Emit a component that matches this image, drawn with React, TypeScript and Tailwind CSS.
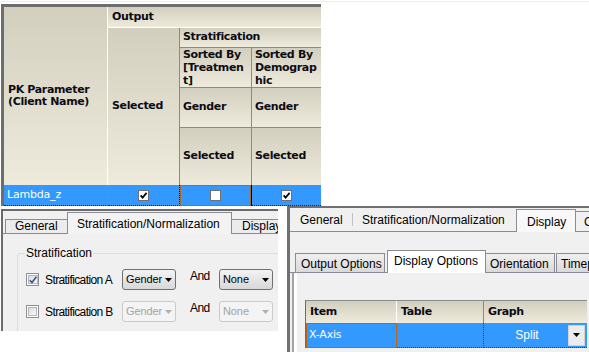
import React from 'react';

// header cell look of the old grid control
const hdr =
  "bg-linear-to-b from-[#d2cfbf] to-[#eeebdc] font-['Tahoma','DejaVu_Sans',sans-serif] font-bold text-[11px] tracking-[-0.35px] text-[#0c0c14]";

const GridCheck = ({ checked }: { checked: boolean }) => (
  <span className="w-[11px] h-[11px] bg-white border border-[#707070] flex items-center justify-center">
    {checked && (
      <svg width="7" height="7" viewBox="0 0 7 7">
        <path d="M0.6 3.4L2.6 5.6L6.6 0.8" stroke="#000" strokeWidth="1.7" fill="none" />
      </svg>
    )}
  </span>
);

const WinCheck = ({ checked }: { checked: boolean }) => (
  <span className="w-[13px] h-[13px] border border-[#8e8f8f] bg-white p-px flex shrink-0">
    <span className="flex-1 border border-[#b4b8bd] bg-linear-to-br from-[#d9dbde] to-[#f9f9f9] flex items-center justify-center">
      {checked && (
        <svg width="8" height="8" viewBox="0 0 8 8">
          <path d="M0.8 4.2L3 6.6L7.4 0.8" stroke="#3b4f8c" strokeWidth="1.6" fill="none" />
        </svg>
      )}
    </span>
  </span>
);

const Combo = ({ text, disabled }: { text: string; disabled?: boolean }) => (
  <div
    className={
      disabled
        ? 'w-[54px] h-[21px] shrink-0 rounded-[3px] border border-[#c8cbce] bg-[#f4f4f4] flex items-center pl-[3px] pr-[3px] text-[11px] tracking-[-0.1px] text-[#a3a3a3]'
        : 'w-[54px] h-[21px] shrink-0 rounded-[3px] border border-[#707070] bg-linear-to-b from-[#f3f3f3] to-[#d8d8d8] flex items-center pl-[3px] pr-[3px] text-[11px] tracking-[-0.1px] text-black'
    }
  >
    <span className="flex-1">{text}</span>
    <svg width="7" height="4" viewBox="0 0 7 4">
      <path d="M0 0H7L3.5 4Z" fill={disabled ? '#b0b0b0' : '#000'} />
    </svg>
  </div>
);

function TopGrid() {
  return (
    <div>
      <div className="mt-px h-px bg-[#ededed]" />
      <div className="mt-[2px] ml-px w-[320px] border-t-[3px] border-l-[3px] border-[#6d6d6d]">
        <div className="grid grid-cols-[104px_72px_72px_69px] grid-rows-[21px_20px_40px_40px_57px_21px]">
          <div className={`${hdr} row-span-5 border-r border-white flex items-center pl-[4px] leading-[12px]`}>
            <div>
              PK Parameter
              <br />
              (Client Name)
            </div>
          </div>
          <div className={`${hdr} col-span-3 border-b border-white flex items-center pl-[4px]`}>Output</div>
          <div className={`${hdr} row-span-4 border-r border-[#8a8a8a] flex items-center pl-[4px]`}>Selected</div>
          <div className={`${hdr} col-span-2 border-b border-[#8a8a8a] flex items-center pl-[3px]`}>Stratification</div>
          <div className={`${hdr} border-r border-b border-[#8a8a8a] pl-[3px] leading-[13px] overflow-hidden`}>
            Sorted By
            <br />
            [Treatmen
            <br />
            t]
          </div>
          <div className={`${hdr} border-b border-[#8a8a8a] pl-[3px] leading-[13px] overflow-hidden`}>
            Sorted By
            <br />
            Demograp
            <br />
            hic
          </div>
          <div className={`${hdr} border-r border-b border-[#8a8a8a] flex items-center pl-[3px]`}>Gender</div>
          <div className={`${hdr} border-b border-[#8a8a8a] flex items-center pl-[3px]`}>Gender</div>
          <div className={`${hdr} border-r border-[#8a8a8a] flex items-center pl-[3px]`}>Selected</div>
          <div className={`${hdr} flex items-center pl-[3px]`}>Selected</div>

          {/* data row */}
          <div className="bg-[#3399ff] border-r border-b border-r-[#8a8a8a] border-b-[#1a1a1a] border-dotted flex items-center pl-[3px] text-white text-[11px] tracking-[-0.2px] font-['Tahoma','DejaVu_Sans',sans-serif]">
            Lambda_z
          </div>
          <div className="bg-[#3399ff] border-r border-r-black border-b border-dotted border-b-[#1a1a1a] flex items-center justify-center">
            <GridCheck checked />
          </div>
          <div className="bg-[#3399ff] border-r border-r-black flex">
            <div className="flex-1 border border-[#b8651c] flex items-center justify-center">
              <GridCheck checked={false} />
            </div>
          </div>
          <div className="bg-[#3399ff] border-b border-dotted border-b-[#1a1a1a] flex items-center justify-center">
            <GridCheck checked />
          </div>
        </div>
      </div>
    </div>
  );
}

function LeftPanel() {
  return (
    <div className="ml-px mt-[3px] w-[277px] h-[122px] shrink-0 border-l-2 border-t-2 border-[#6b6b6b] bg-[#f0f0f0] overflow-hidden font-['Liberation_Sans',Arial,sans-serif] text-black">
      {/* tabs */}
      <div className="h-[23px] pl-[2px] flex items-end border-b border-[#898c95]">
        <div className="w-[62px] h-[14px] shrink-0 border-l border-t border-[#898c95] bg-[#ececec] text-[12px] leading-[13px] pl-[9px]">
          General
        </div>
        <div className="w-[165px] h-[22px] shrink-0 -mb-px border-l border-t border-r border-[#898c95] bg-[#f3f3f3] text-[12px] leading-[14px] pt-[4px] pl-[9px]">
          Stratification/Normalization
        </div>
        <div className="w-[60px] h-[14px] shrink-0 border-t border-r border-[#898c95] bg-[#ececec] text-[12px] leading-[13px] pl-[10px]">
          Display
        </div>
      </div>
      {/* group box */}
      <fieldset className="ml-[14px] mt-[12px] w-[300px] h-[120px] border border-[#d5dfe5] rounded-[3px]">
        <legend className="ml-[7px] px-px text-[12px] leading-[14px]">Stratification</legend>
        <div className="pl-[8px] pt-[9px] text-[12px] tracking-[-0.6px]">
          <div className="flex items-center h-[21px]">
            <WinCheck checked />
            <span className="ml-[6px] w-[77px] shrink-0">Stratification A</span>
            <Combo text="Gender" />
            <span className="ml-[14px] w-[29px] shrink-0 self-start leading-[13px] mt-px">And</span>
            <Combo text="None" />
          </div>
          <div className="flex items-center h-[21px] mt-[11px]">
            <WinCheck checked={false} />
            <span className="ml-[6px] w-[77px] shrink-0">Stratification B</span>
            <Combo text="Gender" disabled />
            <span className="ml-[14px] w-[29px] shrink-0 self-start leading-[13px] mt-px">And</span>
            <Combo text="None" disabled />
          </div>
        </div>
      </fieldset>
    </div>
  );
}

function RightPanel() {
  return (
    <div className="ml-[9px] w-[302px] h-[146px] shrink-0 border-l-[3px] border-t-2 border-[#707070] bg-[#f0f0f0] overflow-hidden font-['Liberation_Sans',Arial,sans-serif] text-black text-[12px]">
      {/* main tabs */}
      <div className="h-[24px] flex items-end border-b border-[#898c95]">
        <div className="w-[62px] shrink-0 self-center pl-[10px] leading-[14px] mt-[1px]">General</div>
        <div className="w-px h-[13px] shrink-0 self-center bg-[#c2c2c2]" />
        <div className="w-[163px] shrink-0 self-center pl-[9px] leading-[14px] mt-[1px]">Stratification/Normalization</div>
        <div className="w-[60px] h-[23px] -mb-px shrink-0 border-l border-t border-r border-[#898c95] bg-[#f8f8f8] pl-[10px] pt-[5px] leading-[14px]">
          Display
        </div>
        <div className="w-[40px] h-[20px] shrink-0 border-t border-[#898c95] pl-[8px] pt-[3px] leading-[14px] overflow-hidden">
          Chart
        </div>
      </div>
      {/* sub tabs */}
      <div className="h-[41px] pl-[5px] flex items-end border-b border-[#898c95]">
        <div className="w-[90px] h-[19px] shrink-0 border-l border-t border-r border-[#898c95] bg-linear-to-b from-[#f0f0f0] to-[#d9d9d9] pl-[5px] pt-[3px] leading-[14px]">
          Output Options
        </div>
        <div className="ml-[2px] w-[99px] h-[23px] -mb-px shrink-0 border-l border-t border-r border-[#898c95] bg-white pl-[6px] pt-[3px] leading-[14px]">
          Display Options
        </div>
        <div className="w-[69px] h-[19px] shrink-0 border-t border-r border-[#898c95] bg-linear-to-b from-[#f0f0f0] to-[#d9d9d9] pl-[4px] pt-[3px] leading-[14px]">
          Orientation
        </div>
        <div className="ml-px w-[60px] h-[19px] shrink-0 border-l border-t border-[#898c95] bg-linear-to-b from-[#f0f0f0] to-[#d9d9d9] pl-[4px] pt-[3px] leading-[14px] overflow-hidden">
          Timepoints
        </div>
      </div>
      {/* sub page */}
      <div className="ml-[2px] h-[80px] border-l-2 border-[#a3a3a3]">
        <div className="h-full border-l-[3px] border-white pt-[27px] pl-[8px]">
          <div className="w-[282px] border-l border-t border-l-[#6b6b6b] border-t-[#8a8a8a] grid grid-cols-[91px_87px_103px] grid-rows-[22px_25px]">
            <div className={`${hdr} border-r border-white flex items-center pl-[4px]`}>Item</div>
            <div className={`${hdr} border-r border-[#8a8a8a] flex items-center pl-[4px]`}>Table</div>
            <div className={`${hdr} flex items-center pl-[4px]`}>Graph</div>
            <div className="bg-[#3399ff] border border-[#b8651c] flex items-center pl-[2px] text-white text-[11px] tracking-[-0.2px] font-['Tahoma','DejaVu_Sans',sans-serif]">
              X-Axis
            </div>
            <div className="bg-[#3399ff] border-r border-b border-dotted border-[#3a3a3a]" />
            <div className="bg-[#3399ff] border-b border-dotted border-[#3a3a3a] flex items-center">
              <span className="flex-1 text-center text-white text-[12px] font-['Liberation_Sans',Arial,sans-serif] pl-[2px]">
                Split
              </span>
              <span className="w-[17px] h-[21px] mr-[2px] bg-[#ececec] border border-[#d4d4d4] flex items-center justify-center">
                <svg width="7" height="4" viewBox="0 0 7 4">
                  <path d="M0 0H7L3.5 4Z" fill="#000" />
                </svg>
              </span>
            </div>
          </div>
        </div>
      </div>
    </div>
  );
}

export default function App() {
  return (
    <div className="w-[589px] h-[352px] bg-white overflow-hidden">
      <TopGrid />
      <div className="flex items-start">
        <LeftPanel />
        <RightPanel />
      </div>
    </div>
  );
}
